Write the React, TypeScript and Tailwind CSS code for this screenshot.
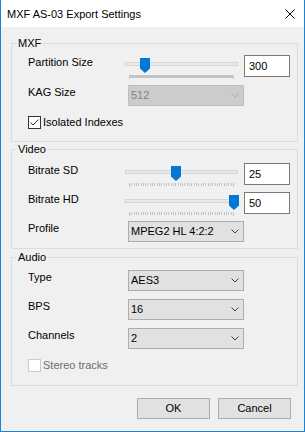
import type { ReactNode } from 'react'

function GroupBox({ title, className, children }: { title: string; className: string; children: ReactNode }) {
  return (
    <div className={`relative border border-[#dcdcdc] ${className}`}>
      <span className="absolute top-[-7px] left-[5px] px-[1px] bg-[#f0f0f0] leading-[13px]">{title}</span>
      {children}
    </div>
  )
}

function Label({ children, narrow }: { children: ReactNode; narrow?: boolean }) {
  return (
    <div className={`${narrow ? 'w-[97px]' : 'w-[100px]'} shrink-0 pt-[1px] leading-[13px]`}>{children}</div>
  )
}

function Chevron({ disabled }: { disabled?: boolean }) {
  return (
    <svg width="8" height="5" viewBox="0 0 8 5">
      <polyline points="0.5,0.5 4,4 7.5,0.5" fill="none" stroke={disabled ? '#b0b0b0' : '#404040'} strokeWidth="1" />
    </svg>
  )
}

function Combo({ value, disabled }: { value: string; disabled?: boolean }) {
  return (
    <div
      className={`w-[116px] h-[21px] border flex items-center justify-between pl-[2px] pr-[4px] ${
        disabled ? 'bg-[#cccccc] border-[#bfbfbf] text-[#838383]' : 'bg-[#e1e1e1] border-[#adadad]'
      }`}>
      <span className="leading-[13px]">{value}</span>
      <Chevron disabled={disabled} />
    </div>
  )
}

function NumBox({ value }: { value: string }) {
  return (
    <div className="ml-[6px] w-[46px] h-[22px] border border-[#7a7a7a] bg-white pl-[4px] flex items-center leading-[13px]">
      {value}
    </div>
  )
}

function Slider({ value, min, max, dense }: { value: number; min: number; max: number; dense?: boolean }) {
  // thumb centre follows the tick scale, which runs 104px from x=4
  const left = Math.round(4 + ((value - min) / (max - min)) * 104 - 4.5)
  const ticks = Array.from({ length: 46 }, (_, i) => Math.round((i * 104) / 45))
  return (
    <div className="relative w-[113px] h-[22px] shrink-0">
      <div className="absolute top-[7px] left-0 right-0 h-[4px] border border-[#d6d6d6] bg-[#e7eaea]" />
      <svg className="absolute top-[20px] left-[4px]" width="105" height="5" viewBox="0 0 105 5">
        {dense ? (
          <>
            <rect x="0" y="0" width="105" height="3" fill="#c4c4c4" />
            <rect x="0" y="0" width="1" height="4" fill="#c4c4c4" />
            <rect x="104" y="0" width="1" height="4" fill="#c4c4c4" />
          </>
        ) : (
          ticks.map((x, i) => (
            <rect key={i} x={x} y="0" width="1" height={i === 0 || i === 45 ? 4 : 3} fill="#c4c4c4" />
          ))
        )}
      </svg>
      <svg className="absolute top-[3px]" style={{ left }} width="10" height="15" viewBox="0 0 10 15">
        <path d="M0 0H10V10.5L5 15L0 10.5Z" fill="#0078d7" />
      </svg>
    </div>
  )
}

function Check({ label, checked, disabled }: { label: string; checked?: boolean; disabled?: boolean }) {
  return (
    <div className="flex items-center h-[13px]">
      <div className={`w-[13px] h-[13px] border bg-white ${disabled ? 'border-[#cccccc]' : 'border-[#333333]'}`}>
        {checked && (
          <svg width="11" height="11" viewBox="0 0 11 11">
            <polyline points="1.5,5.5 4,8 9.5,2.5" fill="none" stroke="#333333" strokeWidth="1" />
          </svg>
        )}
      </div>
      <span className={`ml-[2px] leading-[13px] ${disabled ? 'text-[#6d6d6d]' : ''}`}>{label}</span>
    </div>
  )
}

function Button({ children }: { children: ReactNode }) {
  return (
    <div className="w-[73px] h-[21px] border border-[#adadad] bg-[#e1e1e1] flex items-center justify-center leading-[13px]">
      {children}
    </div>
  )
}

export default function App() {
  return (
    <div className="w-[305px] h-[432px] flex flex-col border-x border-b border-[#1883d7] bg-[#f0f0f0] text-[11px] text-black font-['Liberation_Sans',Arial,sans-serif]">
      <div className="h-[27px] bg-white flex items-center justify-between pl-[6px] pr-[9px]">
        <span className="leading-[14px]">MXF AS-03 Export Settings</span>
        <svg width="10" height="10" viewBox="0 0 10 10">
          <path d="M0.5 0.5L9.5 9.5M9.5 0.5L0.5 9.5" stroke="#000" strokeWidth="1" />
        </svg>
      </div>

      <div className="flex flex-col pl-[10px] pr-[6px]">
        <GroupBox title="MXF" className="mt-[16px] h-[99px] pt-[11px] pl-[16px]">
          <div className="flex">
            <Label narrow>Partition Size</Label>
            <Slider value={300} min={100} max={1440} dense />
            <NumBox value="300" />
          </div>
          <div className="flex mt-[8px]">
            <Label>KAG Size</Label>
            <Combo value="512" disabled />
          </div>
          <div className="mt-[10px]">
            <Check label="Isolated Indexes" checked />
          </div>
        </GroupBox>

        <GroupBox title="Video" className="mt-[7px] h-[100px] pt-[13px] pl-[16px]">
          <div className="flex">
            <Label narrow>Bitrate SD</Label>
            <Slider value={25} min={5} max={50} />
            <NumBox value="25" />
          </div>
          <div className="flex mt-[7px]">
            <Label narrow>Bitrate HD</Label>
            <Slider value={50} min={5} max={50} />
            <NumBox value="50" />
          </div>
          <div className="flex mt-[7px]">
            <Label>Profile</Label>
            <Combo value="MPEG2 HL 4:2:2" />
          </div>
        </GroupBox>

        <GroupBox title="Audio" className="mt-[8px] h-[129px] pt-[12px] pl-[16px]">
          <div className="flex">
            <Label>Type</Label>
            <Combo value="AES3" />
          </div>
          <div className="flex mt-[8px]">
            <Label>BPS</Label>
            <Combo value="16" />
          </div>
          <div className="flex mt-[8px]">
            <Label>Channels</Label>
            <Combo value="2" />
          </div>
          <div className="mt-[10px]">
            <Check label="Stereo tracks" disabled />
          </div>
        </GroupBox>

        <div className="flex justify-end gap-[8px] mt-[12px] pr-[7px]">
          <Button>OK</Button>
          <Button>Cancel</Button>
        </div>
      </div>
    </div>
  )
}
